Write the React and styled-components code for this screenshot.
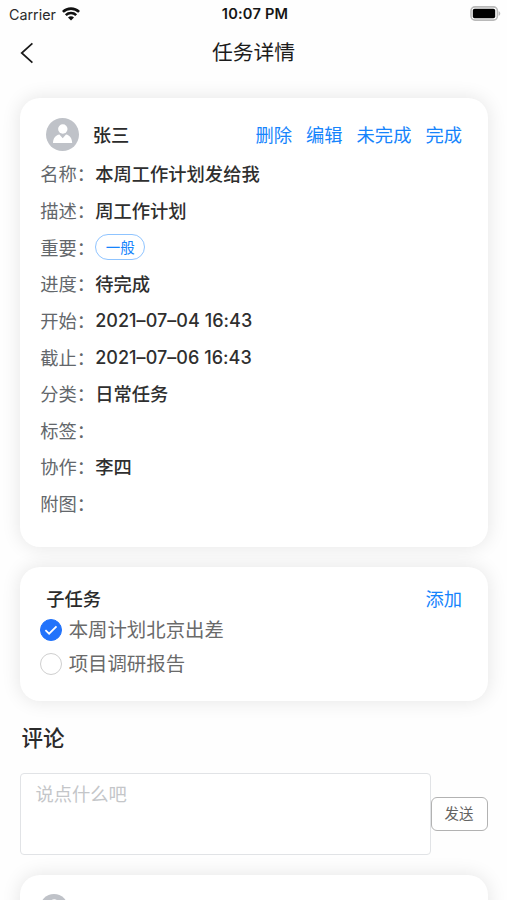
import React from 'react';
import styled, { createGlobalStyle } from 'styled-components';

const GlobalStyle = createGlobalStyle`
  * { box-sizing: border-box; }
  body {
    margin: 0;
    background: #fff;
    color: #333;
    font-family: Inter, "Noto Sans CJK SC", sans-serif;
    -webkit-font-smoothing: antialiased;
  }
`;

const Screen = styled.div`
  height: 900px;
  overflow: hidden;
  background: #fefefe;
`;

const StatusBar = styled.header`
  display: grid;
  grid-template-columns: 1fr auto 1fr;
  align-items: center;
  height: 27px;
  padding: 0 6px 0 9px;
  color: #151515;
  font-size: 14.3px;
  line-height: 27px;
`;

const Carrier = styled.div`
  display: flex;
  align-items: center;
  gap: 6px;
  color: #2a2a2a;
`;

const Clock = styled.div`
  padding-top: 1px;
  font-size: 14.6px;
  font-weight: 600;
  letter-spacing: 0.2px;
`;

const BatterySlot = styled.div`
  display: flex;
  justify-content: flex-end;
  padding-bottom: 1px;
`;

const NavBar = styled.nav`
  display: grid;
  grid-template-columns: 60px 1fr 60px;
  align-items: center;
  height: 51px;
`;

const BackButton = styled.button`
  display: flex;
  padding: 0 0 0 19px;
  border: 0;
  background: none;
`;

const NavTitle = styled.h1`
  margin: 0;
  color: #1c1c1c;
  font-size: 20.8px;
  font-weight: 400;
  line-height: 52px;
  text-align: center;
`;

const Content = styled.main`
  padding: 20px 19.5px 0 20.4px;
`;

const Card = styled.section`
  height: ${(p) => p.$height}px;
  margin-bottom: 20px;
  padding: ${(p) => p.$top}px 25.5px 0 19.8px;
  border-radius: 20px;
  background: #fff;
  box-shadow: 0 0 19px rgba(0, 0, 0, 0.105);
`;

const CardHeader = styled.div`
  display: flex;
  align-items: center;
  height: ${(p) => p.$height}px;
  padding-left: 6px;
`;

const CommentHeader = styled.div`
  display: flex;
`;

const CardTitle = styled.h2`
  margin: 0 auto 0 ${(p) => p.$indent || 0}px;
  color: #2b2b2b;
  font-size: 18.3px;
  font-weight: 500;
  line-height: 30px;
`;

const Actions = styled.div`
  display: flex;
  gap: 14px;
`;

const ActionLink = styled.a`
  color: #1684fc;
  font-size: 18.3px;
  line-height: 30px;
  white-space: nowrap;
`;

const Fields = styled.dl`
  margin: 0;
`;

const Field = styled.div`
  display: flex;
  align-items: center;
  height: 36.65px;
  font-size: 18.3px;
`;

const FieldLabel = styled.dt`
  width: 55px;
  color: #63676b;
  white-space: nowrap;
`;

const FieldValue = styled.dd`
  margin: 0;
  color: #2f2f2f;
  font-weight: 500;
`;

const DateValue = styled.span`
  font-size: 18px;
  letter-spacing: 0.04px;
`;

const Tag = styled.span`
  display: flex;
  align-items: center;
  justify-content: center;
  width: 50px;
  height: 26px;
  border: 1px solid #8fc4ff;
  border-radius: 13px;
  color: #1684fc;
  font-size: 14.5px;
  font-weight: 400;
`;

const Subtask = styled.div`
  display: flex;
  align-items: center;
  gap: 6.5px;
  height: 34px;
  color: #6a6a6a;
  font-size: 19.4px;
  line-height: 34px;
`;

const Check = styled.span`
  display: flex;
  align-items: center;
  justify-content: center;
  width: 22px;
  height: 22px;
  border: 1.5px solid ${(p) => (p.$checked ? '#2273fb' : '#cfcfcf')};
  border-radius: 50%;
  background: ${(p) => (p.$checked ? '#2273fb' : '#fff')};
`;

const SectionTitle = styled.h2`
  margin: 0;
  padding-left: 1px;
  height: 52px;
  color: #2b2b2b;
  font-size: 21.5px;
  font-weight: 500;
  line-height: 34px;
`;

const Composer = styled.div`
  display: flex;
  align-items: center;
  margin-bottom: 20px;
`;

const CommentInput = styled.textarea`
  display: block;
  width: 410.6px;
  height: 82px;
  padding: 5px 14px;
  border: 1.5px solid #e1e3e6;
  border-radius: 4px;
  outline: 0;
  resize: none;
  background: #fff;
  font-family: inherit;
  font-size: 18.3px;
  line-height: 30px;
  &::placeholder { color: #c4c6c9; opacity: 1; }
`;

const SendButton = styled.button`
  width: 57px;
  height: 34px;
  padding: 0;
  border: 1.3px solid #b2b2b2;
  border-radius: 6px;
  background: #fff;
  color: #636363;
  font-family: inherit;
  font-size: 14.5px;
  line-height: 30px;
`;

const WifiIcon = () => (
  <svg width="18" height="14" viewBox="0 0 18 14" fill="none" stroke="#111" strokeWidth="2.6">
    <path d="M.9 4.9C5.5.5 12.5.5 17.1 4.9" />
    <path d="M3.8 8.1c2.9-2.8 7.5-2.8 10.4 0" />
    <path d="M6 10.4c1.7-1.6 4.3-1.6 6 0L9 13.5Z" fill="#111" stroke="none" />
  </svg>
);

const BatteryIcon = () => (
  <svg width="31" height="15" viewBox="0 0 31 15">
    <rect x="1" y="0.9" width="26.4" height="13.2" rx="4" fill="#fff" stroke="#b9b9b9" strokeWidth="1.6" />
    <rect x="2.8" y="2.8" width="22.4" height="9.4" rx="1.8" fill="#000" />
    <path d="M28.6 5.2c2.2.7 2.2 3.9 0 4.6Z" fill="#b9b9b9" />
  </svg>
);

const BackIcon = () => (
  <svg width="16" height="22" viewBox="0 0 16 22" fill="none" stroke="#1a1a1a" strokeWidth="1.7">
    <path d="M13.4 1.3 2.7 11l10.7 9.7" />
  </svg>
);

const Avatar = ({ size = 33 }) => (
  <svg width={size} height={size} viewBox="0 0 33 33">
    <circle cx="16.5" cy="16.5" r="16.5" fill="#bfc2c8" />
    <circle cx="16.8" cy="11" r="4.7" fill="#fff" />
    <path d="M7 25c.2-5 2.5-7.9 6.4-8.6l3.3 3.8 3.3-3.8c3.8.7 6 3.6 6.2 8.6Z" fill="#fff" />
  </svg>
);

const CheckMark = () => (
  <svg width="14" height="12" viewBox="0 0 14 12" fill="none" stroke="#fff" strokeWidth="1.8">
    <path d="m1.4 6.2 3.7 3.5 7.4-7.4" />
  </svg>
);

const fields = [
  ['名称', '本周工作计划发给我'],
  ['描述', '周工作计划'],
  ['重要', <Tag key="tag">一般</Tag>],
  ['进度', '待完成'],
  ['开始', <DateValue key="start">2021–07–04 16:43</DateValue>],
  ['截止', <DateValue key="end">2021–07–06 16:43</DateValue>],
  ['分类', '日常任务'],
  ['标签', ''],
  ['协作', '李四'],
  ['附图', ''],
];

const subtasks = [
  { title: '本周计划北京出差', done: true },
  { title: '项目调研报告', done: false },
];

export default function App() {
  return (
    <Screen>
      <GlobalStyle />
      <StatusBar>
        <Carrier>Carrier <WifiIcon /></Carrier>
        <Clock>10:07 PM</Clock>
        <BatterySlot><BatteryIcon /></BatterySlot>
      </StatusBar>
      <NavBar>
        <BackButton aria-label="返回"><BackIcon /></BackButton>
        <NavTitle>任务详情</NavTitle>
      </NavBar>
      <Content>
        <Card $height={449} $top={16}>
          <CardHeader $height={41}>
            <Avatar />
            <CardTitle $indent={13.5}>张三</CardTitle>
            <Actions>
              {['删除', '编辑', '未完成', '完成'].map((a) => (
                <ActionLink key={a}>{a}</ActionLink>
              ))}
            </Actions>
          </CardHeader>
          <Fields>
            {fields.map(([label, value]) => (
              <Field key={label}>
                <FieldLabel>{label}：</FieldLabel>
                <FieldValue>{value}</FieldValue>
              </Field>
            ))}
          </Fields>
        </Card>
        <Card $height={134} $top={17}>
          <CardHeader $height={29}>
            <CardTitle>子任务</CardTitle>
            <ActionLink>添加</ActionLink>
          </CardHeader>
          {subtasks.map((s) => (
            <Subtask key={s.title}>
              <Check $checked={s.done}>{s.done && <CheckMark />}</Check>
              {s.title}
            </Subtask>
          ))}
        </Card>
        <SectionTitle>评论</SectionTitle>
        <Composer>
          <CommentInput placeholder="说点什么吧" />
          <SendButton>发送</SendButton>
        </Composer>
        <Card $height={134} $top={19}>
          <CommentHeader>
            <Avatar size={28} />
          </CommentHeader>
        </Card>
      </Content>
    </Screen>
  );
}
